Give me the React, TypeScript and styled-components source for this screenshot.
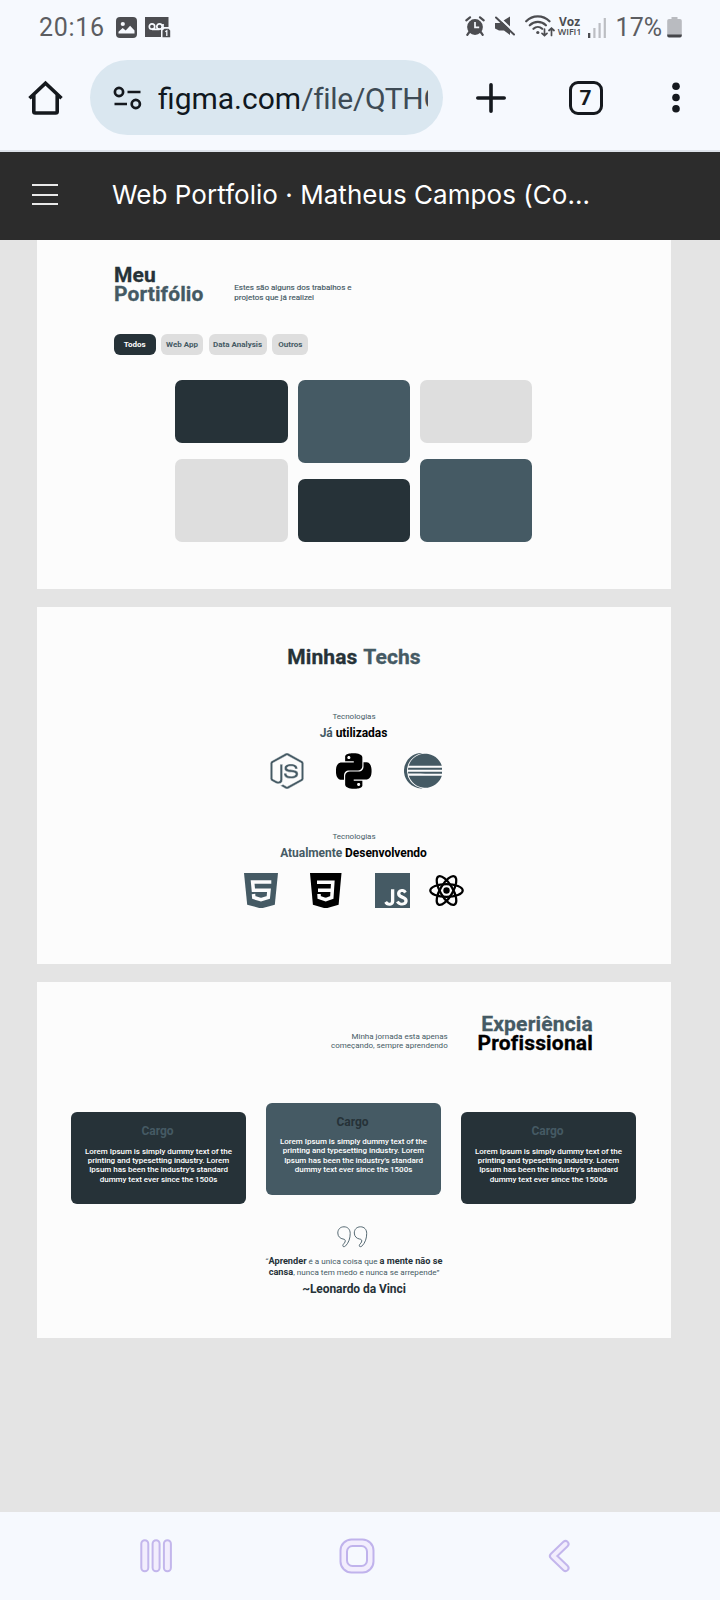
import React from "react";
import styled, { createGlobalStyle } from "styled-components";
import { SiNodedotjs, SiPython, SiEclipseide, SiJavascript } from "react-icons/si";

const ink = "#263238";
const slate = "#455a64";
const silver = "#dedede";
const paper = "#fcfcfc";
const chrome = "#f6f9fe";

const GlobalStyle = createGlobalStyle`
  * { box-sizing: border-box; }
  body { margin: 0; background: #e4e4e4; font-family: Roboto, "Liberation Sans", sans-serif; }
  svg { display: block; flex: none; }
  h2, h3, p { margin: 0; }
`;

const Screen = styled.div`
  width: 720px;
  height: 1600px;
  display: flex;
  flex-direction: column;
  overflow: hidden;
`;

/* ---------- system status bar ---------- */
const StatusBar = styled.header`
  height: 54px;
  flex: none;
  display: flex;
  align-items: center;
  padding: 0 38px 0 39px;
  background: ${chrome};
  color: #4c4d51;
`;
const Clock = styled.span`
  font-size: 25px;
  letter-spacing: 0.7px;
  width: 77px;
  padding-top: 1px;
  line-height: 30px;
  opacity: 0.9;
`;
const StatusIcons = styled.div`
  display: flex;
  align-items: center;
  gap: 8px;
`;
const StatusRight = styled.div`
  display: flex;
  align-items: center;
  margin-left: auto;
`;
const StatusGlyph = styled.span<{ $after: number }>`
  margin: -2px ${(p) => p.$after}px 0 0;
`;
const Carrier = styled.div`
  width: 26px;
  margin: 0 5px 0 2px;
  text-align: center;
  font-family: "Open Sans", Roboto, sans-serif;
  font-weight: 700;
  font-size: 12px;
  line-height: 10px;
`;
const CarrierSmall = styled.div`
  font-size: 9px;
  font-weight: 600;
  letter-spacing: -0.1px;
`;
const Percent = styled.span`
  font-size: 25px;
  line-height: 30px;
  margin: 0 5px 0 10px;
  padding-top: 1px;
  opacity: 0.9;
`;

/* ---------- browser toolbar ---------- */
const Toolbar = styled.div`
  height: 98px;
  flex: none;
  display: flex;
  align-items: flex-start;
  padding: 6px 0 0 28px;
  background: ${chrome};
  border-bottom: 2px solid #dde2ea;
`;
const ToolIcon = styled.div<{ $left: number }>`
  height: 75px;
  display: flex;
  align-items: center;
  margin-left: ${(p) => p.$left}px;
`;
const AddressBar = styled.div`
  width: 353px;
  height: 75px;
  margin-left: 27px;
  border-radius: 38px;
  background: #dae7f0;
  display: flex;
  align-items: center;
  padding-left: 23px;
`;
const Url = styled.div`
  width: 270px;
  margin-left: 15px;
  padding-top: 2px;
  overflow: hidden;
  white-space: nowrap;
  font-size: 30px;
  line-height: 40px;
  color: #101820;
`;
const UrlPath = styled.span`
  color: #3e4b55;
  letter-spacing: -0.3px;
`;
const TabCount = styled.div`
  width: 34px;
  height: 34px;
  border: 3px solid #15191e;
  border-radius: 9px;
  color: #15191e;
  font-size: 21px;
  font-weight: 700;
  line-height: 28px;
  text-align: center;
`;

/* ---------- file title bar ---------- */
const TitleBar = styled.div`
  height: 88px;
  flex: none;
  display: flex;
  align-items: center;
  padding: 0 0 3px 32px;
  background: #2c2c2c;
  color: #fff;
`;
const MenuButton = styled.div`
  width: 26px;
  height: 21px;
  display: flex;
  flex-direction: column;
  justify-content: space-between;
`;
const MenuLine = styled.div`
  height: 2px;
  background: #e9e9e9;
`;
const FileTitle = styled.div`
  margin-left: 54px;
  font-family: Inter, Roboto, sans-serif;
  font-size: 26px;
  line-height: 32px;
  letter-spacing: 0.04px;
  white-space: nowrap;
`;

/* ---------- canvas frames ---------- */
const Canvas = styled.main`
  flex: 1;
  min-height: 0;
  padding-left: 37px;
  background: #e4e4e4;
`;
const Frame = styled.section<{ $height: number; $gap?: number; $top: number }>`
  width: 634px;
  height: ${(p) => p.$height}px;
  margin-top: ${(p) => p.$gap ?? 0}px;
  padding-top: ${(p) => p.$top}px;
  background: ${paper};
  overflow: hidden;
`;
const Heading = styled.h2<{ $color?: string }>`
  font-size: 21px;
  line-height: 19.6px;
  font-weight: 700;
  letter-spacing: 0.1px;
  -webkit-text-stroke: 0.3px;
  color: ${(p) => p.$color ?? ink};
`;
const Tint = styled.span<{ $color: string }>`
  color: ${(p) => p.$color};
`;
const Blurb = styled.p`
  font-size: 8px;
  line-height: 9.4px;
  color: ${slate};
  white-space: nowrap;
`;

const PortfolioHead = styled.div`
  display: flex;
  padding-left: 77px;
  ${Heading} { width: 120.3px; }
  ${Blurb} { margin-top: 17.3px; -webkit-text-stroke: 0.15px; }
`;
const Chips = styled.div`
  display: flex;
  gap: 5.8px;
  margin: 28.6px 0 0 77px;
`;
const Chip = styled.div<{ $width: number; $active?: boolean }>`
  width: ${(p) => p.$width}px;
  height: 21.5px;
  border-radius: 6px;
  background: ${(p) => (p.$active ? ink : silver)};
  color: ${(p) => (p.$active ? "#fff" : slate)};
  font-size: 8px;
  font-weight: 700;
  line-height: 22.5px;
  text-align: center;
  white-space: nowrap;
`;
const Tiles = styled.div`
  display: flex;
  gap: 10px;
  margin: 24.7px 0 0 138.4px;
`;
const TileColumn = styled.div`
  width: 112.2px;
  height: 162.4px;
  display: flex;
  flex-direction: column;
  justify-content: space-between;
`;
const Tile = styled.div<{ $tall?: boolean; $color: string }>`
  height: ${(p) => (p.$tall ? 83 : 62.8)}px;
  border-radius: 7px;
  background: ${(p) => p.$color};
`;

const TechHeading = styled(Heading)`
  line-height: 24px;
  text-align: center;
  word-spacing: 1.2px;
`;
const TechLabel = styled.p<{ $top: number }>`
  margin-top: ${(p) => p.$top}px;
  font-size: 8px;
  line-height: 10px;
  text-align: center;
  color: ${slate};
`;
const TechTitle = styled.h3`
  margin-top: 4.2px;
  padding-right: 1px;
  font-size: 12px;
  line-height: 14px;
  font-weight: 700;
  text-align: center;
  letter-spacing: -0.05px;
  color: #000;
`;
const TechIcons = styled.div<{ $left: number }>`
  display: flex;
  height: 36px;
  margin: 13px 0 0 ${(p) => p.$left}px;
`;
const TechIcon = styled.div<{ $gap?: number; $width?: number; $height?: number; $color: string }>`
  margin-left: ${(p) => p.$gap ?? 0}px;
  color: ${(p) => p.$color};
  svg {
    ${(p) => p.$width && `width: ${p.$width}px;`}
    ${(p) => p.$height && `height: ${p.$height}px;`}
  }
`;

const ExperienceHead = styled.div`
  display: flex;
  justify-content: flex-end;
  padding-right: 78px;
  text-align: right;
  ${Heading} { width: 145.3px; letter-spacing: 0.18px; }
  ${Blurb} { margin-top: 17.4px; }
`;
const Cards = styled.div`
  display: flex;
  gap: 20px;
  margin: 48.8px 0 0 34px;
`;
const Card = styled.article<{ $raised?: boolean }>`
  width: 175px;
  height: 92px;
  margin-top: ${(p) => (p.$raised ? 0 : 9.6)}px;
  padding-top: 12.2px;
  border-radius: 6px;
  background: ${(p) => (p.$raised ? slate : ink)};
  text-align: center;
`;
const CardTitle = styled.h3<{ $color: string }>`
  padding-right: 2px;
  font-size: 12px;
  line-height: 14px;
  font-weight: 700;
  color: ${(p) => p.$color};
`;
const CardText = styled.p`
  margin-top: 8.2px;
  font-size: 8px;
  line-height: 9.33px;
  font-weight: 500;
  letter-spacing: -0.03px;
  white-space: nowrap;
  color: #fff;
`;
const QuoteMark = styled.div`
  margin: 22px 0 0 300px;
`;
const Quote = styled.p`
  margin-top: 7.6px;
  font-size: 8.1px;
  line-height: 11px;
  text-align: center;
  color: ${slate};
`;
const Strong = styled.b`
  font-size: 9.2px;
  line-height: 0;
  color: ${ink};
`;
const Author = styled.p`
  margin-top: 4.6px;
  font-size: 12px;
  line-height: 14px;
  font-weight: 700;
  text-align: center;
  letter-spacing: -0.07px;
  color: ${ink};
`;

/* ---------- system navigation ---------- */
const NavBar = styled.nav`
  height: 88px;
  flex: none;
  display: flex;
  align-items: center;
  gap: 167px;
  padding-left: 140px;
  background: ${chrome};
  svg:last-child { margin-left: 6px; }
`;

const LOREM = [
  "Lorem Ipsum is simply dummy text of the",
  "printing and typesetting industry. Lorem",
  "Ipsum has been the industry's standard",
  "dummy text ever since the 1500s",
];

function CargoCard({ raised }: { raised?: boolean }) {
  return (
    <Card $raised={raised}>
      <CardTitle $color={raised ? ink : slate}>Cargo</CardTitle>
      <CardText>
        {LOREM.map((line) => (
          <React.Fragment key={line}>
            {line}
            <br />
          </React.Fragment>
        ))}
      </CardText>
    </Card>
  );
}

const PictureIcon = () => (
  <svg width="21" height="21" viewBox="0 0 21 21">
    <rect width="21" height="21" rx="4" fill="currentColor" />
    <circle cx="6.8" cy="7" r="2.1" fill={chrome} />
    <path d="M2.5 16.5v-1.8l4.2-3.6 3 2.4 4.4-4.7 4.4 4.6v3.1z" fill={chrome} />
  </svg>
);
const VoicemailIcon = () => (
  <svg width="26" height="21" viewBox="0 0 26 21">
    <path d="M0 0h23.500v10H16v10H0z" fill="currentColor" />
    <g fill="none" stroke={chrome} strokeWidth="1.7">
      <circle cx="7" cy="9.500" r="2.700" />
      <circle cx="14.500" cy="9.500" r="2.700" />
      <path d="M7 12.300h7.500M18 7v4.500h6" />
    </g>
    <path d="M16 12h10v9H16z" fill={chrome} />
    <path d="M17.500 13.500l2-1.800h4l1.700 1.800v6.700h-7.700z" fill="currentColor" />
    <path d="M20.300 14.800l1.500-1v5.200" fill="none" stroke={chrome} strokeWidth="1.300" />
  </svg>
);
const AlarmIcon = () => (
  <svg width="20" height="20" viewBox="0 0 20 20">
    <circle cx="10" cy="11" r="7.900" fill="currentColor" />
    <path d="M1.300 4.300L5 1.300M18.700 4.300L15 1.300M4.300 16l-2 2.800M15.700 16l2 2.800" stroke="currentColor" strokeWidth="2.200" strokeLinecap="round" />
    <path d="M10 6v5.300h4.200" fill="none" stroke={chrome} strokeWidth="1.700" />
  </svg>
);
const MuteIcon = () => (
  <svg width="20" height="20" viewBox="0 0 20 20">
    <path d="M0 7h4.500L15 .5V19L9 14.500H4L0 12.500z" fill="currentColor" />
    <path d="M2.500 0L20 16.800" stroke={chrome} strokeWidth="2.200" />
    <path d="M1 1.500L19 18.500" stroke="currentColor" strokeWidth="2" strokeLinecap="round" />
  </svg>
);
const WifiIcon = () => (
  <svg width="30" height="22" viewBox="0 0 30 22">
    <g fill="none" stroke="currentColor" strokeWidth="2.200" strokeLinecap="round">
      <path d="M1.200 6.300C7.500-.2 18-.2 24.500 6.300M4.800 10.300c4.500-4.500 11.600-4.500 16.100 0M8.500 13.800c2.500-2.400 6.200-2.400 8.700 0" />
      <path d="M19.500 14v6.500M17 18.300l2.500 2.300 2.500-2.300M26.500 20.500v-7M24 15.500l2.500-2.300 2.500 2.300" strokeWidth="1.700" />
    </g>
    <circle cx="12.800" cy="17.500" r="1.600" fill="currentColor" />
  </svg>
);
const SignalIcon = () => (
  <svg width="18" height="21" viewBox="0 0 18 21">
    <path d="M0 16h2.300v5H0z" fill="currentColor" />
    <path d="M5.300 11h2.200v10H5.300zM10.500 6h2.200v15h-2.200zM15.700 1h2.200v20h-2.200z" fill="#bcbec3" />
  </svg>
);
const BatteryIcon = () => (
  <svg width="15" height="21" viewBox="0 0 15 21">
    <path d="M4.500 0h6v2H13a1.800 1.800 0 0 1 1.800 1.800V18H.2V3.800A1.800 1.800 0 0 1 2 2h2.500z" fill="#b9bbc0" />
    <path d="M.2 17.500h14.600v1.200A1.800 1.800 0 0 1 13 20.500H2A1.800 1.800 0 0 1 .2 18.700z" fill="#45464a" />
  </svg>
);
const HomeIcon = () => (
  <svg width="35" height="35" viewBox="0 0 35 35" fill="none" stroke="#15191e" strokeWidth="3.600" strokeLinejoin="miter">
    <path d="M1.500 18.300L17.500 3.300l16 15M5.800 15V31.500a1.500 1.500 0 0 0 1.500 1.500H27.700a1.500 1.500 0 0 0 1.500-1.500V15" />
  </svg>
);
const TuneIcon = () => (
  <svg width="30" height="24" viewBox="0 0 30 24" fill="none" stroke="#15191e" strokeWidth="2.700">
    <circle cx="6" cy="6" r="4.100" />
    <circle cx="22.800" cy="18" r="4.100" />
    <path d="M14.500 6h13M1.500 18h12.500" />
  </svg>
);
const PlusIcon = () => (
  <svg width="30" height="30" viewBox="0 0 30 30" stroke="#15191e" strokeWidth="3.600" strokeLinecap="round">
    <path d="M15 1.800v26.400M1.800 15h26.400" />
  </svg>
);
const MoreIcon = () => (
  <svg width="8" height="31" viewBox="0 0 8 31" fill="#15191e">
    <circle cx="4" cy="4.200" r="3.800" />
    <circle cx="4" cy="15.500" r="3.800" />
    <circle cx="4" cy="26.800" r="3.800" />
  </svg>
);

const HtmlShield = () => (
  <svg width="34" height="35.500" viewBox="0 0 34 35.500">
    <path d="M0 0H34L30.800 31.700 17 35.500 3.200 31.700z" fill="currentColor" />
    <path d="M27.300 9H8.600l.8 8.200H25l-.7 7.300-7.300 2.100-7.200-2.100-.3-3.500" fill="none" stroke={paper} strokeWidth="3.500" />
  </svg>
);
const CssShield = () => (
  <svg width="31.500" height="35.500" viewBox="0 0 31.500 35.500">
    <path d="M0 0H31.500L28.600 31.700 15.700 35.500 2.900 31.700z" fill="currentColor" />
    <path d="M7 9.300H22.800L21.800 24.500 15.700 26.600 9.200 24.500 9 21M8 17.200H22" fill="none" stroke={paper} strokeWidth="3.500" />
  </svg>
);
const ReactAtom = () => (
  <svg width="35" height="35" viewBox="-17.500 -17.500 35 35" fill="none" stroke="currentColor" strokeWidth="2.300">
    <ellipse rx="16.200" ry="6.300" />
    <ellipse rx="16.200" ry="6.300" transform="rotate(60)" />
    <ellipse rx="16.200" ry="6.300" transform="rotate(120)" />
    <circle r="3.200" fill="currentColor" stroke="none" />
  </svg>
);

const NINE = "M7 .8C3 .8.8 3.600.8 7c0 3.600 2.600 5.600 5.200 6 2.200.3 2.600 1.200 2 3-.6 1.600-2.200 2.200-2.200 3.700 0 1.300 1.700 1.300 2.800.2C11.800 16.700 13.200 12 13.200 7.500 13.200 3.500 10.800.8 7 .8z";
const Quotes = () => (
  <svg width="31" height="22" viewBox="0 0 31 22" fill="none" stroke={slate} strokeWidth="0.900">
    <path d={NINE} />
    <path d={NINE} transform="translate(16.500 0)" />
  </svg>
);

const RecentsIcon = () => (
  <svg width="32" height="34" viewBox="0 0 32 34" fill="#f2edfd" stroke="#c3b6ec" strokeWidth="2">
    <rect x="1.300" y="1.300" width="7" height="31" rx="3.500" />
    <rect x="12.600" y="1.300" width="7" height="31" rx="3.500" />
    <rect x="23.900" y="1.300" width="7" height="31" rx="3.500" />
  </svg>
);
const HomeNavIcon = () => (
  <svg width="36" height="36" viewBox="0 0 36 36" stroke="#c0b3ec" strokeWidth="2">
    <rect x="1.500" y="1.500" width="33" height="33" rx="11" fill="#f2edfd" />
    <rect x="8" y="8" width="20" height="20" rx="5.500" fill={chrome} />
  </svg>
);
const BackIcon = () => (
  <svg width="22" height="34" viewBox="0 0 22 34" fill="none" strokeLinecap="round" strokeLinejoin="round">
    <path d="M17.500 5L5 17 17.500 29" stroke="#c3b6ec" strokeWidth="8" />
    <path d="M17.500 5L5 17 17.500 29" stroke="#f2edfd" strokeWidth="4" />
  </svg>
);

export default function App() {
  return (
    <Screen>
      <GlobalStyle />
      <StatusBar>
        <Clock>20:16</Clock>
        <StatusIcons>
          <PictureIcon />
          <VoicemailIcon />
        </StatusIcons>
        <StatusRight>
          <StatusGlyph $after={10}><AlarmIcon /></StatusGlyph>
          <StatusGlyph $after={10}><MuteIcon /></StatusGlyph>
          <StatusGlyph $after={0}><WifiIcon /></StatusGlyph>
          <Carrier>
            Voz
            <CarrierSmall>WIFI1</CarrierSmall>
          </Carrier>
          <SignalIcon />
          <Percent>17%</Percent>
          <BatteryIcon />
        </StatusRight>
      </StatusBar>

      <Toolbar>
        <ToolIcon $left={0}><HomeIcon /></ToolIcon>
        <AddressBar>
          <TuneIcon />
          <Url>
            figma.com<UrlPath>/file/QTHG</UrlPath>
          </Url>
        </AddressBar>
        <ToolIcon $left={33}><PlusIcon /></ToolIcon>
        <ToolIcon $left={62.5}><TabCount>7</TabCount></ToolIcon>
        <ToolIcon $left={69}><MoreIcon /></ToolIcon>
      </Toolbar>

      <TitleBar>
        <MenuButton>
          <MenuLine />
          <MenuLine />
          <MenuLine />
        </MenuButton>
        <FileTitle>Web Portfolio · Matheus Campos (Co...</FileTitle>
      </TitleBar>

      <Canvas>
        <Frame $height={349} $top={25.8}>
          <PortfolioHead>
            <Heading>
              Meu
              <br />
              <Tint $color={slate}>Portifólio</Tint>
            </Heading>
            <Blurb>
              Estes são alguns dos trabalhos e<br />
              projetos que já realizei
            </Blurb>
          </PortfolioHead>
          <Chips>
            <Chip $width={41.5} $active>Todos</Chip>
            <Chip $width={41.5}>Web App</Chip>
            <Chip $width={58}>Data Analysis</Chip>
            <Chip $width={36}>Outros</Chip>
          </Chips>
          <Tiles>
            <TileColumn>
              <Tile $color={ink} />
              <Tile $color={silver} $tall />
            </TileColumn>
            <TileColumn>
              <Tile $color={slate} $tall />
              <Tile $color={ink} />
            </TileColumn>
            <TileColumn>
              <Tile $color={silver} />
              <Tile $color={slate} $tall />
            </TileColumn>
          </Tiles>
        </Frame>

        <Frame $height={357} $gap={18} $top={37.5}>
          <TechHeading>
            Minhas <Tint $color={slate}>Techs</Tint>
          </TechHeading>
          <TechLabel $top={43.5}>Tecnologias</TechLabel>
          <TechTitle>
            <Tint $color={slate}>Já</Tint> utilizadas
          </TechTitle>
          <TechIcons $left={233}>
            <TechIcon $color={slate} $width={34} $height={36}>
              <SiNodedotjs viewBox="1.2 0 21.6 24" preserveAspectRatio="none" stroke={paper} strokeWidth={0.3} />
            </TechIcon>
            <TechIcon $color="#000" $gap={32} $width={35.5} $height={36}><SiPython /></TechIcon>
            <TechIcon $color={slate} $gap={32} $width={38.5} $height={35.5}>
              <SiEclipseide viewBox="0 0 24 24" preserveAspectRatio="none" />
            </TechIcon>
          </TechIcons>
          <TechLabel $top={42.6}>Tecnologias</TechLabel>
          <TechTitle>
            <Tint $color={slate}>Atualmente</Tint> Desenvolvendo
          </TechTitle>
          <TechIcons $left={207}>
            <TechIcon $color={slate}><HtmlShield /></TechIcon>
            <TechIcon $color="#000" $gap={32}><CssShield /></TechIcon>
            <TechIcon $color={slate} $gap={33} $width={35.5} $height={35.5}><SiJavascript /></TechIcon>
            <TechIcon $color="#000" $gap={18.5}><ReactAtom /></TechIcon>
          </TechIcons>
        </Frame>

        <Frame $height={356} $gap={18} $top={32.7}>
          <ExperienceHead>
            <Blurb>
              Minha jornada esta apenas
              <br />
              começando, sempre aprendendo
            </Blurb>
            <Heading $color="#000">
              <Tint $color={slate}>Experiência</Tint>
              <br />
              Profissional
            </Heading>
          </ExperienceHead>
          <Cards>
            <CargoCard />
            <CargoCard raised />
            <CargoCard />
          </Cards>
          <QuoteMark><Quotes /></QuoteMark>
          <Quote>
            “<Strong>Aprender</Strong> é a unica coisa que <Strong>a mente não se</Strong>
            <br />
            <Strong>cansa</Strong>, nunca tem medo e nunca se arrepende”
          </Quote>
          <Author>~Leonardo da Vinci</Author>
        </Frame>
      </Canvas>

      <NavBar>
        <RecentsIcon />
        <HomeNavIcon />
        <BackIcon />
      </NavBar>
    </Screen>
  );
}
